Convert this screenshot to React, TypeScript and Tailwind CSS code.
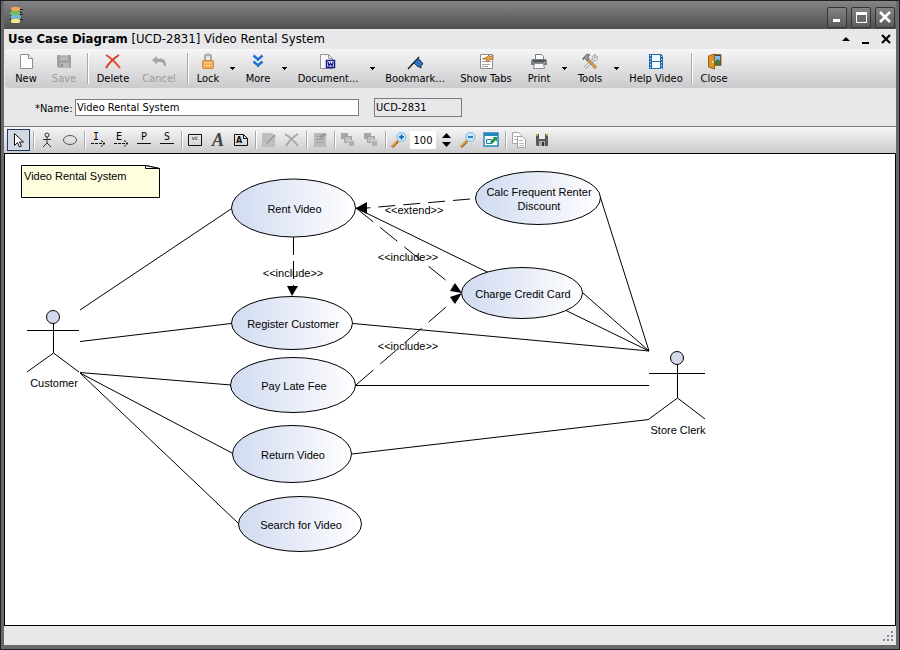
import type { ReactNode } from "react";

interface ToolProps {
  label: string;
  width: string;
  icon: ReactNode;
  disabled?: boolean;
}

function Tool({ label, width, icon, disabled }: ToolProps) {
  return (
    <button
      type="button"
      disabled={disabled}
      className={
        "flex h-full shrink-0 flex-col items-center whitespace-nowrap pt-1 text-[11px] leading-[18px] " +
        width +
        (disabled ? " text-[#9b9b9b]" : " text-black")
      }
    >
      <svg width="18" height="17" viewBox="0 0 18 17" fill="none" aria-hidden>
        {icon}
      </svg>
      <span>{label}</span>
    </button>
  );
}

function Drop({ label }: { label: string }) {
  return (
    <button type="button" aria-label={label} className="flex h-full w-4 shrink-0 items-center justify-center">
      <svg width="5" height="3" viewBox="0 0 5 3" shapeRendering="crispEdges" aria-hidden>
        <path d="M0 0h5L2.500 3z" fill="#000" />
      </svg>
    </button>
  );
}

function Sep() {
  return (
    <div className="flex h-full w-2 shrink-0 justify-center py-1">
      <div className="w-[2px] border-l border-[#a9a9ad] bg-white" />
    </div>
  );
}

function DrawSep() {
  return (
    <div className="flex h-full w-[5px] shrink-0 justify-end py-1">
      <div className="w-[2px] border-l border-[#a9a9ad] bg-white" />
    </div>
  );
}

function DrawTool({
  label,
  icon,
  active,
  disabled,
}: {
  label: string;
  icon: ReactNode;
  active?: boolean;
  disabled?: boolean;
}) {
  return (
    <button
      type="button"
      aria-label={label}
      aria-pressed={active}
      disabled={disabled}
      className={
        "flex h-[22px] w-[23px] shrink-0 items-center justify-center " +
        (active ? "border border-[#1d3768] bg-[#d3d8e2]" : "")
      }
    >
      <svg width="18" height="18" viewBox="0 0 18 18" fill="none" className="shrink-0 overflow-visible" aria-hidden>
        {icon}
      </svg>
    </button>
  );
}

// Main toolbar icons, 18x17
const newIcon = (
  <>
    <path d="M3.500 1.500h8l4 4v10h-12z" fill="#fff" stroke="#8d8d92" />
    <path d="M11.500 1.500v4h4" fill="#eee" stroke="#8d8d92" />
  </>
);
const saveIcon = (
  <>
    <path d="M2 2h14v13H4l-2-2z" fill="#a2a2a4" />
    <path d="M5 2h8v5H5z" fill="#c4c4c6" />
    <path d="M5 3.500h8M5 5.500h8" stroke="#aaaaad" />
    <path d="M5 10h9v5H5z" fill="#b9b9bb" />
    <path d="M6 11h2v3H6z" fill="#8f8f92" />
  </>
);
const deleteIcon = (
  <>
    <path d="M2 2c5 3 10 8 14 13" stroke="#e2492b" strokeWidth="2" />
    <path d="M15 2C10 5 5 10 2 15" stroke="#d63a1e" strokeWidth="2" />
  </>
);
const cancelIcon = <path d="M2 7l5-4v2.500h3c4 0 6 2.500 6 7.500h-2c0-3-1.500-4-4-4H7v2.500z" fill="#a4a4a6" />;
const lockIcon = (
  <>
    <path d="M6 8V4.500c0-4 6-4 6 0V8" stroke="#8d8780" strokeWidth="2" />
    <path d="M6 8V4.500c0-4 6-4 6 0V8" stroke="#e0dcd6" strokeWidth=".8" />
    <rect x="3.500" y="7.500" width="11" height="8" rx="1" fill="#f5ab55" stroke="#cc8a40" />
    <path d="M5 10h8M5 12.500h8" stroke="#ffd08d" />
  </>
);
const moreIcon = (
  <>
    <path d="M4.500 2.500L9 6.500l4.500-4M4.500 8.500L9 12.500l4.500-4" stroke="#1f6fd0" strokeWidth="2.400" />
    <path d="M8 6h2v2H8zM8 12h2v2H8z" fill="#1f6fd0" />
  </>
);
const documentIcon = (
  <>
    <path d="M1.500 1.500h8l4 4v10h-12z" fill="#f8f8fa" stroke="#96969b" />
    <path d="M9.500 1.500v4h4" stroke="#96969b" />
    <rect x="7.500" y="7.500" width="8" height="7" fill="#fff" stroke="#15158a" strokeWidth="1.500" />
    <path d="M9 9l1 4 1.500-3 1.500 3 1-4" stroke="#15158a" strokeWidth="1.200" />
  </>
);
const bookmarkIcon = (
  <>
    <path d="M2 16L13 4" stroke="#111" strokeWidth="1.300" />
    <path d="M11 6l3 1 3 4-2 1v3l-4-2-3-3z" fill="#3474bd" stroke="#123763" />
  </>
);
const showTabsIcon = (
  <>
    <path d="M3.500 1.500h12v14h-12z" fill="#fff" stroke="#8b8b8e" />
    <path d="M5 8.500h9M5 11.500h8M5 13.500h6M5 5.500h3" stroke="#a3a4b0" />
    <path d="M6 6l4-2 2-2 1 2 3-2v4l-4 1-1 2-2-1 1-2z" fill="#eba647" stroke="#a56523" strokeWidth=".8" />
  </>
);
const printIcon = (
  <>
    <path d="M5.500 1.500h6l2 2v4h-8z" fill="#fff" stroke="#777b82" />
    <path d="M2 6h14l1 2v4H1V8z" fill="#7b7f86" />
    <path d="M3 7h12v2H3z" fill="#4f535a" />
    <path d="M4.500 10.500h9l1 5h-11z" fill="#f8f8fa" stroke="#888b91" />
    <path d="M14 9h1v1h-1z" fill="#9ff09d" />
  </>
);
const toolsIcon = (
  <>
    <path d="M4 15L13 6" stroke="#85888a" strokeWidth="3" />
    <path d="M4 15L13 6" stroke="#f0f1f2" strokeWidth="1.700" />
    <path d="M15 2l-2 2 1 1 2-2c2 4-2 6-4 4s0-6 3-5z" fill="#e2e4e5" stroke="#909395" strokeWidth=".8" />
    <path d="M7 7l8 8" stroke="#9a6224" strokeWidth="2.800" />
    <path d="M7 7l8 8" stroke="#e7a94c" strokeWidth="1.500" />
    <path d="M2 5l4-4 3 1-2 1 1 3-2 2-2-3-2 2z" fill="#96999b" stroke="#5c5f62" strokeWidth=".8" />
  </>
);
const videoIcon = (
  <>
    <path d="M2 1h12l2 2v13H2z" fill="#246caf" />
    <path d="M5 2h8v6H5zM5 9h8v6H5z" fill="#eef8ff" />
    <path d="M3.500 2v14M14.500 3v13" stroke="#d5ebfb" strokeDasharray="1 2" />
  </>
);
const closeIcon = (
  <>
    <path d="M8 1.500h8v11H8z" fill="#2e4659" stroke="#a4681b" />
    <path d="M10 3h5v5h-5z" fill="#84bbf2" />
    <path d="M10 8l3-2 2 2v4h-5z" fill="#46773e" />
    <path d="M3.500 3l6-2v15l-6-2z" fill="#dc9328" stroke="#995e15" />
    <path d="M7 8h1.500v2H7z" fill="#ffe59a" />
  </>
);

// Drawing toolbar icons, 18x18
const pointerIcon = <path d="M4.500 2.500v12l3-3 2 4.500 2-1-2-4h4z" fill="#fff" stroke="#111" />;
const actorIcon = (
  <>
    <circle cx="9" cy="4" r="2" stroke="#333" />
    <path d="M5 8.500h8M9 6v6L5 16M9 12l4 4" stroke="#333" />
  </>
);
const ovalIcon = <ellipse cx="9" cy="9" rx="6.500" ry="4.500" stroke="#555" />;

function linkIcon(letter: string, arrow: boolean) {
  return (
    <>
      <text x={arrow ? 7 : 9} y="9" textAnchor="middle" fontSize="10" fill="#000" className="font-['DejaVu_Sans_Mono',monospace]">
        {letter}
      </text>
      {arrow ? (
        <path d="M2 12.500h14M12 9.500l4 3-4 3" stroke="#111" strokeDasharray="3 1" />
      ) : (
        <path d="M2 12.500h14" stroke="#111" />
      )}
    </>
  );
}

const boundaryIcon = (
  <>
    <path d="M2.500 3.500h13v11h-13z" stroke="#111" />
    <text x="9" y="9" textAnchor="middle" fontSize="6" fill="#111" className="font-['DejaVu_Sans',sans-serif]">
      vc
    </text>
  </>
);
const textIcon = (
  <text x="9" y="15" textAnchor="middle" className="fill-[#444] font-['Liberation_Serif',serif] text-[18px] font-bold italic">
    A
  </text>
);
const noteIcon = (
  <>
    <path d="M2.500 3.500h9l4 4v7h-13zM11.500 3.500v4h4" stroke="#111" />
    <text x="7" y="12" textAnchor="middle" fontSize="8" fontWeight="700" fill="#111" className="font-['DejaVu_Sans',sans-serif]">
      A
    </text>
  </>
);
const editIcon = (
  <>
    <path d="M2 2h10l3 3v11H2z" fill="#bebec0" />
    <path d="M5 14l1-3 8-8 2 2-8 8z" fill="#a0a0a3" stroke="#d0d0d1" strokeWidth=".7" />
  </>
);
const removeIcon = <path d="M2 3c5 3 9 7 13 12M15 3C10 6 6 10 3 15" stroke="#a7a7a9" strokeWidth="2" />;
const propsIcon = (
  <>
    <path d="M3 2h12v14H3z" fill="#bababc" />
    <path d="M5 8.500h8M5 11.500h8M5 5.500h3" stroke="#a0a0a3" />
    <path d="M8 5l6-3 2 2-6 4z" fill="#9a9a9d" />
  </>
);
const layersIcon = (
  <>
    <path d="M2 2h7v6H2z" fill="#a5a5a8" />
    <path d="M5.500 5.500h7v6h-7z" fill="#bebec0" stroke="#a0a0a3" />
    <path d="M9.500 9.500h6v6h-6z" fill="#b0b0b2" stroke="#d4d4d5" />
  </>
);

function zoomIcon(plus: boolean) {
  return (
    <>
      <path d="M2 16l6-6" stroke="#ad651d" strokeWidth="3" />
      <path d="M2 15l5-5" stroke="#efb35b" strokeWidth="1.500" />
      <circle cx="11.500" cy="6" r="4.500" fill="#c7eaff" stroke="#83b7d8" />
      <path d={plus ? "M9 6h5M11.500 3.500v5" : "M9 6h5"} stroke="#12559c" strokeWidth="1.500" />
    </>
  );
}

const fitIcon = (
  <>
    <path d="M2 2h14v13H2z" fill="#fff" stroke="#2586be" strokeWidth="1.500" />
    <path d="M2 2h14v3H2z" fill="#2586be" />
    <path d="M4.500 8.500h5v4h-5z" stroke="#257baf" />
    <path d="M8 11l4-4-2-1h5v5l-1-2-4 4z" fill="#17983e" />
  </>
);
const copyIcon = (
  <>
    <path d="M2.500 1.500h6l3 3v8h-9z" fill="#fff" stroke="#a2a2a7" />
    <path d="M7.500 5.500h5l3 3v8h-8z" fill="#fff" stroke="#a2a2a7" />
    <path d="M4 5.500h3M4 8.500h3M9 9.500h4M9 12.500h5M9 14.500h5" stroke="#b6b6bc" />
  </>
);
const exportIcon = (
  <>
    <path d="M3 3h12v12H4l-1-1z" fill="#555a55" />
    <path d="M6 3h6v5H6z" fill="#e8edf0" />
    <path d="M6 10h6v5H6z" fill="#a5aaa6" />
    <path d="M9 11h2v4H9z" fill="#323632" />
    <path d="M3 3h2v2H3zM13 3h2v2h-2z" fill="#b5ab4c" />
  </>
);

interface UseCase {
  cx: number;
  cy: number;
  rx: number;
  ry: number;
  lines: string[];
}

const USE_CASES: UseCase[] = [
  { cx: 288.5, cy: 54, rx: 62, ry: 29, lines: ["Rent Video"] },
  { cx: 287, cy: 169, rx: 60.5, ry: 26.5, lines: ["Register Customer"] },
  { cx: 288, cy: 231, rx: 62.5, ry: 27.5, lines: ["Pay Late Fee"] },
  { cx: 287, cy: 300, rx: 59.5, ry: 28.5, lines: ["Return Video"] },
  { cx: 295, cy: 370, rx: 61.5, ry: 27.5, lines: ["Search for Video"] },
  { cx: 533, cy: 44, rx: 62.5, ry: 26.5, lines: ["Calc Frequent Renter", "Discount"] },
  { cx: 517, cy: 139, rx: 60.5, ry: 25.5, lines: ["Charge Credit Card"] },
];

const ASSOCIATIONS = [
  "M75 156L226 55",
  "M75 187.500L226 169.500",
  "M75 218.500L226 231",
  "M75 219L227 299",
  "M75 219L233 369",
  "M351 54L644 197",
  "M595 42L644 197",
  "M578 139L644 197",
  "M348 169.500L644 197",
  "M351 231.500H644",
  "M347 300L644 265.500",
];

const STEREOTYPES = [
  { x: 288, y: 123, text: "<<include>>" },
  { x: 409, y: 60, text: "<<extend>>" },
  { x: 403, y: 107, text: "<<include>>" },
  { x: 403, y: 196, text: "<<include>>" },
];

interface ActorProps {
  x: number;
  y: number;
  arms: number;
  hip: number;
  foot: number;
  reach: number;
  name: string;
}

// arms, hip and foot are distances below the centre of the head
function Actor({ x, y, arms, hip, foot, reach, name }: ActorProps) {
  return (
    <g>
      <circle cx={x} cy={y} r="6.500" fill="#d3d9ea" stroke="#000" />
      <path
        d={`M${x + 0.5} ${y + 7}V${y + hip}M${x - reach} ${y + arms}H${x + reach}M${x - reach} ${y + foot}L${x + 0.5} ${y + hip}L${x + reach} ${y + foot}`}
        fill="none"
        stroke="#000"
      />
      <text x={x + 1} y={y + foot + 15} textAnchor="middle">
        {name}
      </text>
    </g>
  );
}

function Diagram() {
  return (
    <svg
      className="block h-full w-full font-['Liberation_Sans',Arial,sans-serif] text-[11px]"
      role="img"
      aria-label="Video Rental System use cases"
    >
      <defs>
        <linearGradient id="bubble">
          <stop offset="0" stopColor="#d0dbf0" />
          <stop offset=".5" stopColor="#e8ecf8" />
          <stop offset="1" stopColor="#ffffff" />
        </linearGradient>
      </defs>

      <path d="M16.500 11.500h124l14 3v29h-138z" fill="#ffffdf" stroke="#000" />
      <path d="M140.500 11.500v3h14z" fill="#fff" stroke="#000" />
      <text x="19" y="26">Video Rental System</text>

      {ASSOCIATIONS.map((d) => (
        <path key={d} d={d} stroke="#000" fill="none" />
      ))}
      <g stroke="#000" fill="none">
        <path d="M288.500 83V132" strokeDasharray="18 6" />
        <path d="M465 45L362 54" strokeDasharray="17 8" />
        <path d="M351 54L448 132" strokeDasharray="22 9" />
        <path d="M351 231L448 147" strokeDasharray="23 9" />
      </g>
      {/* arrow heads */}
      <path d="M351 54l11-6v12zM287 142l-5-10h11zM457 139l-7-10-5 8zM457 139l-12 4 5 7z" fill="#000" />

      {USE_CASES.map((u) => (
        <g key={u.lines[0]}>
          <ellipse cx={u.cx} cy={u.cy} rx={u.rx} ry={u.ry} fill="url(#bubble)" stroke="#000" />
          {u.lines.map((line, i) => (
            <text key={line} x={u.cx + 1} y={u.cy + 5 + i * 14 - (u.lines.length - 1) * 7} textAnchor="middle">
              {line}
            </text>
          ))}
        </g>
      ))}
      {STEREOTYPES.map((s) => (
        <text key={s.x + "-" + s.y} x={s.x} y={s.y} textAnchor="middle">
          {s.text}
        </text>
      ))}
      <Actor x={48} y={163} arms={13.5} hip={36} foot={55} reach={26} name="Customer" />
      <Actor x={672} y={204} arms={15.5} hip={40} foot={61} reach={28} name="Store Clerk" />
    </svg>
  );
}

function CaptionButton({ label, children }: { label: string; children: ReactNode }) {
  return (
    <button
      type="button"
      aria-label={label}
      className="flex h-[21px] w-5 items-center justify-center rounded-xs border border-[#353537] bg-linear-to-b from-[#858587] to-[#5b5b5d]"
    >
      <svg width="14" height="14" viewBox="0 0 14 14" fill="none" shapeRendering="crispEdges" aria-hidden>
        {children}
      </svg>
    </button>
  );
}

function TitleBar() {
  return (
    <header className="flex h-7 shrink-0 items-center justify-between bg-linear-to-b from-[#858587] to-[#505052] pl-1 pr-px">
      <svg width="16" height="18" viewBox="0 0 16 18" aria-hidden>
        <path d="M12 3.500h3M12 6.500h2M12 8.500h3M12 11.500h2M12 13.500h3M2 5h2M2 9h2M2 13h2" stroke="#222" />
        <rect x="3" y="1" width="9" height="4" rx="1.500" fill="#f0a45b" />
        <rect x="2" y="5" width="10" height="4" rx="1.500" fill="#6cc060" />
        <rect x="3" y="9" width="10" height="4" rx="1.500" fill="#7ab9d4" />
        <rect x="3" y="13" width="9" height="4" rx="1.500" fill="#f4e68b" />
      </svg>
      <div className="flex gap-1 pt-1">
        <CaptionButton label="Minimize window">
          <path d="M3 9h7v3H3z" fill="#fff" />
        </CaptionButton>
        <CaptionButton label="Maximize window">
          <path d="M2 2h11v11H2z" fill="#fff" />
          <path d="M3 5h9v7H3z" fill="#6a6a6c" />
        </CaptionButton>
        <CaptionButton label="Close window">
          <path d="M2 2l10 10M12 2L2 12" stroke="#fff" strokeWidth="2.500" shapeRendering="auto" />
        </CaptionButton>
      </div>
    </header>
  );
}

export default function App() {
  return (
    <div className="flex h-screen flex-col overflow-hidden border border-[#1f1f21] bg-[#69696b] px-[3px] pb-1 font-['DejaVu_Sans_Condensed','DejaVu_Sans',Tahoma,sans-serif] text-black">
      <TitleBar />

      <div className="flex h-5 shrink-0 items-center justify-between bg-[#e8e8ea] px-1">
        <h1 className="text-[13px] leading-5">
          <b>Use Case Diagram</b> [UCD-2831] Video Rental System
        </h1>
        <div className="flex items-center gap-2">
          <button type="button" aria-label="Collapse">
            <svg width="12" height="12" viewBox="0 0 12 12" aria-hidden>
              <path d="M2 8l4-4 4 4z" />
            </svg>
          </button>
          <button type="button" aria-label="Minimize">
            <svg width="12" height="12" viewBox="0 0 12 12" aria-hidden>
              <path d="M2 9h7v2H2z" />
            </svg>
          </button>
          <button type="button" aria-label="Close diagram">
            <svg width="12" height="12" viewBox="0 0 12 12" aria-hidden>
              <path d="M2 2l8 8M10 2l-8 8" stroke="#000" strokeWidth="2.200" />
            </svg>
          </button>
        </div>
      </div>

      <div className="shrink-0 bg-[#e8e8ea] pl-px">
        <div role="toolbar" aria-label="Main" className="flex h-[39px] items-stretch rounded-l-sm bg-linear-to-b from-[#f6f6f7] to-[#cbcbcd] pl-[3px]">
          <Tool label="New" width="w-9" icon={newIcon} />
          <Tool label="Save" width="w-10" icon={saveIcon} disabled />
          <Sep />
          <Tool label="Delete" width="w-[42px]" icon={deleteIcon} />
          <Tool label="Cancel" width="w-[50px]" icon={cancelIcon} disabled />
          <Sep />
          <Tool label="Lock" width="w-8" icon={lockIcon} />
          <Drop label="Lock options" />
          <Tool label="More" width="w-9" icon={moreIcon} />
          <Drop label="More options" />
          <Tool label="Document..." width="w-18" icon={documentIcon} />
          <Drop label="Document options" />
          <Tool label="Bookmark..." width="w-[70px]" icon={bookmarkIcon} />
          <Tool label="Show Tabs" width="w-18" icon={showTabsIcon} />
          <Tool label="Print" width="w-[34px]" icon={printIcon} />
          <Drop label="Print options" />
          <Tool label="Tools" width="w-9" icon={toolsIcon} />
          <Drop label="Tools options" />
          <Tool label="Help Video" width="w-16" icon={videoIcon} />
          <Sep />
          <Tool label="Close" width="w-9" icon={closeIcon} />
        </div>
      </div>

      <form className="flex h-[38px] shrink-0 items-center bg-[#e8e8ea] pl-[31px] text-[11px]">
        <label htmlFor="name" className="w-10 shrink-0 whitespace-nowrap pt-1">
          *Name:
        </label>
        <input
          id="name"
          defaultValue="Video Rental System"
          className="h-[17px] w-[284px] rounded-none border border-[#7b7b80] bg-white px-px outline-none"
        />
        <input
          aria-label="Diagram ID"
          readOnly
          value="UCD-2831"
          className="ml-[15px] h-[19px] w-[88px] rounded-none border border-[#7b7b80] bg-[#e8e8ea] px-px outline-none"
        />
      </form>

      <div
        role="toolbar"
        aria-label="Drawing"
        className="flex h-[27px] shrink-0 items-center border-t border-[#7f7f83] bg-linear-to-b from-[#f6f6f7] to-[#cbcbcd] pl-[3px]"
      >
        <DrawTool label="Select" icon={pointerIcon} active />
        <DrawSep />
        <DrawTool label="Actor" icon={actorIcon} />
        <DrawTool label="Use case" icon={ovalIcon} />
        <DrawSep />
        <DrawTool label="Include" icon={linkIcon("I", true)} />
        <DrawTool label="Extend" icon={linkIcon("E", true)} />
        <DrawTool label="Primary association" icon={linkIcon("P", false)} />
        <DrawTool label="Secondary association" icon={linkIcon("S", false)} />
        <DrawSep />
        <DrawTool label="Boundary" icon={boundaryIcon} />
        <DrawTool label="Text" icon={textIcon} />
        <DrawTool label="Note" icon={noteIcon} />
        <DrawSep />
        <DrawTool label="Edit" icon={editIcon} disabled />
        <DrawTool label="Remove" icon={removeIcon} disabled />
        <DrawSep />
        <DrawTool label="Properties" icon={propsIcon} disabled />
        <DrawSep />
        <DrawTool label="Bring to front" icon={layersIcon} disabled />
        <DrawTool label="Send to back" icon={layersIcon} disabled />
        <DrawSep />
        <DrawTool label="Zoom in" icon={zoomIcon(true)} />
        <input
          aria-label="Zoom percent"
          defaultValue="100"
          className="h-[18px] w-[26px] shrink-0 rounded-none bg-white text-center text-[11px] outline-none"
        />
        <div className="flex h-5 w-5 shrink-0 flex-col items-center justify-between py-[3px]">
          <button type="button" aria-label="Increase zoom">
            <svg width="9" height="5" viewBox="0 0 9 5" className="block" aria-hidden>
              <path d="M0 5l4.500-5L9 5z" />
            </svg>
          </button>
          <button type="button" aria-label="Decrease zoom">
            <svg width="9" height="5" viewBox="0 0 9 5" className="block" aria-hidden>
              <path d="M0 0h9L4.500 5z" />
            </svg>
          </button>
        </div>
        <DrawTool label="Zoom out" icon={zoomIcon(false)} />
        <DrawTool label="Fit to window" icon={fitIcon} />
        <DrawSep />
        <DrawTool label="Copy" icon={copyIcon} />
        <DrawTool label="Save image" icon={exportIcon} />
      </div>

      <main className="min-h-0 flex-1 border border-black bg-white">
        <Diagram />
      </main>

      <footer className="flex h-[19px] shrink-0 items-end justify-end bg-[#e8e8ea] pb-1 pr-[3px]">
        <svg width="10" height="10" viewBox="0 0 10 10" shapeRendering="crispEdges" aria-hidden>
          <path d="M8 0h2v2H8zM4 4h2v2H4zM8 4h2v2H8zM0 8h2v2H0zM4 8h2v2H4zM8 8h2v2H8z" fill="#85858b" />
        </svg>
      </footer>
    </div>
  );
}
